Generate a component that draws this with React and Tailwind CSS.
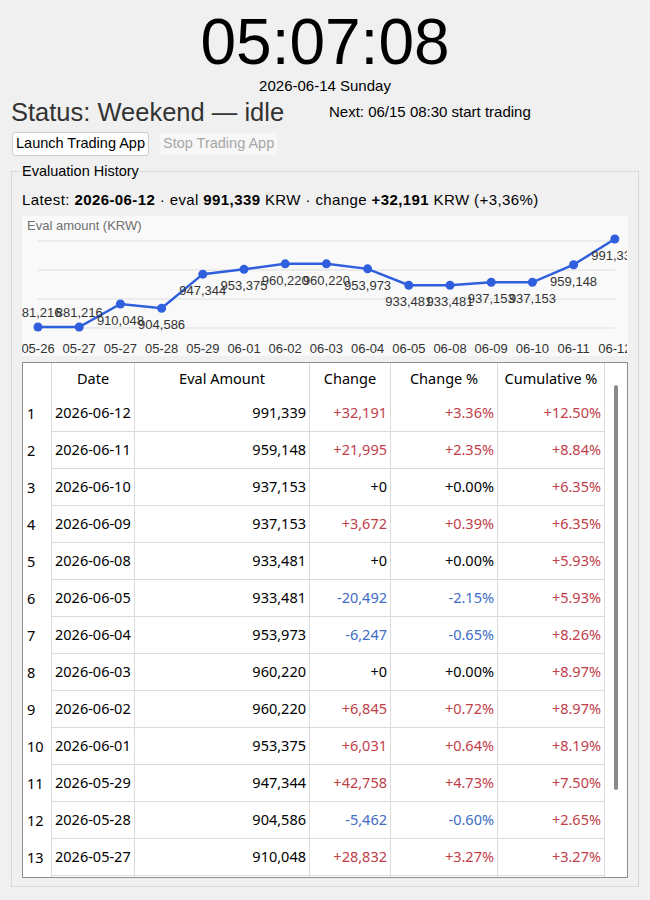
import React from "react";

const rows = [
  ["2026-06-12", "991,339", "+32,191", "+3.36%", "+12.50%"],
  ["2026-06-11", "959,148", "+21,995", "+2.35%", "+8.84%"],
  ["2026-06-10", "937,153", "+0", "+0.00%", "+6.35%"],
  ["2026-06-09", "937,153", "+3,672", "+0.39%", "+6.35%"],
  ["2026-06-08", "933,481", "+0", "+0.00%", "+5.93%"],
  ["2026-06-05", "933,481", "-20,492", "-2.15%", "+5.93%"],
  ["2026-06-04", "953,973", "-6,247", "-0.65%", "+8.26%"],
  ["2026-06-03", "960,220", "+0", "+0.00%", "+8.97%"],
  ["2026-06-02", "960,220", "+6,845", "+0.72%", "+8.97%"],
  ["2026-06-01", "953,375", "+6,031", "+0.64%", "+8.19%"],
  ["2026-05-29", "947,344", "+42,758", "+4.73%", "+7.50%"],
  ["2026-05-28", "904,586", "-5,462", "-0.60%", "+2.65%"],
  ["2026-05-27", "910,048", "+28,832", "+3.27%", "+3.27%"],
  ["2026-05-27", "881,216", "+0", "+0.00%", "+0.00%"],
];

const points = [
  ["05-26", 881216],
  ["05-27", 881216],
  ["05-27", 910048],
  ["05-28", 904586],
  ["05-29", 947344],
  ["06-01", 953375],
  ["06-02", 960220],
  ["06-03", 960220],
  ["06-04", 953973],
  ["06-05", 933481],
  ["06-08", 933481],
  ["06-09", 937153],
  ["06-10", 937153],
  ["06-11", 959148],
  ["06-12", 991339],
];

const tone = (s) => {
  if (s.startsWith("-")) return "text-[#3d6cc4]";
  if (/^\+0(\.00%)?$/.test(s)) return "text-black";
  return "text-[#c0404a]";
};

const fmt = (n) => n.toLocaleString("en-US");

const Chart = () => {
  const min = 881216;
  const max = 991339;
  const px = (i) => 16 + i * 41.2;
  const py = (v) => 111 - ((v - min) / (max - min)) * 88;
  const line = points.map(([, v], i) => `${px(i)},${py(v)}`).join(" ");

  return (
    <div className="h-[140px] bg-[#f9f9f9] overflow-hidden">
      <svg width="605" height="140" style={{ fontFamily: '"Liberation Sans", sans-serif' }}>
        <text x="5" y="14" fontSize="13" fill="#707070">
          Eval amount (KRW)
        </text>
        {[25, 54, 83, 112].map((y) => (
          <line key={y} x1="16" x2="593" y1={y} y2={y} stroke="#ebebeb" strokeWidth="2" />
        ))}
        <polyline points={line} fill="none" stroke="#2f5fdc" strokeWidth="2.5" />
        {points.map(([, v], i) => (
          <circle key={i} cx={px(i)} cy={py(v)} r="4.5" fill="#2f5fdc" />
        ))}
        {points.map(([, v], i) => {
          const y = py(v);
          const ty = i < 2 ? y - 10 : y + 21;
          return (
            <text key={i} x={px(i)} y={ty} fontSize="13" fill="#333" textAnchor="middle">
              {fmt(v)}
            </text>
          );
        })}
        {points.map(([d], i) => (
          <text key={i} x={px(i)} y="137" fontSize="13" fill="#333" textAnchor="middle">
            {d}
          </text>
        ))}
      </svg>
    </div>
  );
};

const cols = "grid grid-cols-[29px_83px_175px_81px_107px_107px]";

const Table = () => (
  <div className="mt-[6px] h-[516px] border border-[#8f8f8f] bg-white flex overflow-hidden font-['Noto_Sans',sans-serif] text-[14.5px]">
    <div className="w-[582px]">
      <div className={`${cols} h-[32px] items-center text-black`}>
        <div className="h-full border-r border-[#dcdcdc]" />
        <div className="h-full flex items-center justify-center border-r border-[#dcdcdc]">Date</div>
        <div className="h-full flex items-center justify-center border-r border-[#dcdcdc]">Eval Amount</div>
        <div className="h-full flex items-center justify-center border-r border-[#dcdcdc]">Change</div>
        <div className="h-full flex items-center justify-center border-r border-[#dcdcdc]">Change %</div>
        <div className="h-full flex items-center justify-center border-r border-[#dcdcdc]">Cumulative %</div>
      </div>
      {rows.map((r, i) => (
        <div key={i} className={`${cols} h-[37px]`}>
          <div className="flex items-center pl-[4px] border-r border-[#dcdcdc] text-black">{i + 1}</div>
          <div className="flex items-center pl-[3px] border-r border-b border-[#dcdcdc] text-black">{r[0]}</div>
          <div className="flex items-center justify-end pr-[3px] border-r border-b border-[#dcdcdc] text-black">{r[1]}</div>
          <div className={`flex items-center justify-end pr-[3px] border-r border-b border-[#dcdcdc] ${tone(r[2])}`}>{r[2]}</div>
          <div className={`flex items-center justify-end pr-[3px] border-r border-b border-[#dcdcdc] ${tone(r[3])}`}>{r[3]}</div>
          <div className={`flex items-center justify-end pr-[3px] border-r border-b border-[#dcdcdc] ${tone(r[4])}`}>{r[4]}</div>
        </div>
      ))}
    </div>
    <div className="w-[22px] pt-[22px]">
      <div className="ml-[9px] w-[4px] h-[405px] rounded-full bg-[#8a8a8a]" />
    </div>
  </div>
);

export default function App() {
  return (
    <div className="w-[650px] h-[900px] bg-[#f0f0f0] overflow-hidden text-black font-['Liberation_Sans',sans-serif]">
      <div className="pt-[10px] text-center text-[64px] leading-[64px]">05:07:08</div>
      <div className="mt-[2px] text-center text-[15px] leading-[20px]">2026-06-14 Sunday</div>
      <div className="flex items-center h-[32px] pl-[11px]">
        <span className="w-[318px] text-[25.5px] text-[#333]">Status: Weekend — idle</span>
        <span className="text-[15px]">Next: 06/15 08:30 start trading</span>
      </div>
      <div className="flex gap-[10px] pl-[12px] mt-[4px] text-[14.5px]">
        <button className="h-[24px] px-[3px] bg-[#fdfdfd] border border-[#d0d0d0] rounded-[3px]">
          Launch Trading App
        </button>
        <button className="h-[24px] px-[3px] bg-[#f7f7f7] border border-[#f2f2f2] rounded-[3px] text-[#a6a6a6]">
          Stop Trading App
        </button>
      </div>
      <fieldset className="mt-[5px] ml-[11px] mr-[12px] border border-[#d8d8d8] px-[10px] pb-[8px] pt-0">
        <legend className="ml-[-1px] px-[1px] text-[14.5px] leading-[20px]">Evaluation History</legend>
        <div className="mt-[7px] h-[28px] pb-[4px] flex items-center text-[15px] tracking-[0.4px]">
          Latest:&nbsp;<b>2026-06-12</b>&nbsp;·&nbsp;eval&nbsp;<b>991,339</b>&nbsp;KRW&nbsp;·&nbsp;change&nbsp;<b>+32,191</b>&nbsp;KRW (+3,36%)
        </div>
        <Chart />
        <Table />
      </fieldset>
    </div>
  );
}
